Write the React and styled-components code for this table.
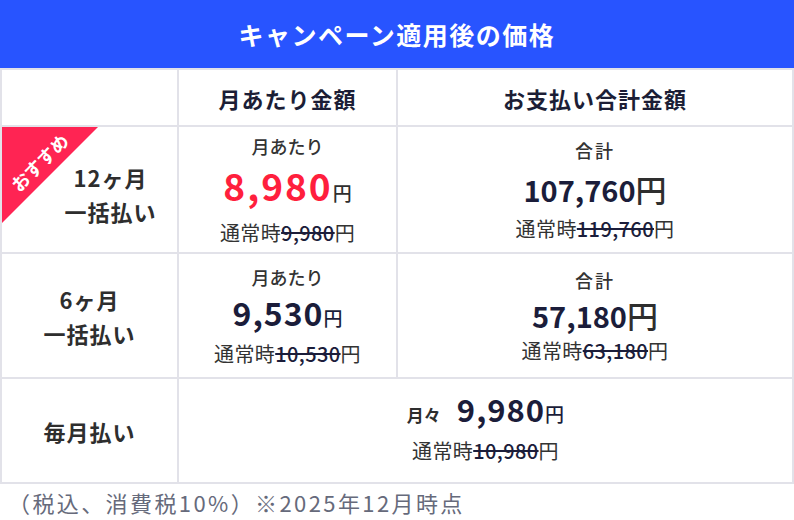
import React from 'react';
import styled, { createGlobalStyle } from 'styled-components';

const GlobalStyle = createGlobalStyle`
    body {
        margin: 0;
        background: #fff;
        font-family: "Noto Sans CJK JP", "Noto Sans", sans-serif;
    }
`;

const Page = styled.div`
    width: 794px;
    height: 520px;
    overflow: hidden;
    background: #fff;
`;

const Title = styled.div`
    height: 68px;
    background-color: #2854ff;
    color: #fff;
    font-size: 25px;
    font-weight: 700;
    letter-spacing: 1.5px;
    display: flex;
    align-items: center;
    justify-content: center;
`;

const Grid = styled.div`
    display: grid;
    grid-template-columns: 175px 217px 1fr;
    grid-template-rows: 55px 125px 123px 103px;
    gap: 2px;
    padding: 2px;
    background-color: #e2e2e9;
`;

const Cell = styled.div`
    position: relative;
    overflow: hidden;
    background-color: #fff;
    display: flex;
    flex-direction: column;
    align-items: center;
    justify-content: center;
    grid-column: ${(p) => p.span || 'auto'};
`;

const HeadText = styled.div`
    font-size: 22px;
    font-weight: 700;
    letter-spacing: 1px;
    color: #1c1e36;
`;

const PlanLabel = styled.div`
    font-size: 22px;
    font-weight: 700;
    line-height: 34px;
    letter-spacing: 1px;
    color: #2e2e2e;
    text-align: center;
    margin-top: ${(p) => p.offset || 0}px;
    margin-left: ${(p) => p.shift || 0}px;
`;

const Badge = styled.div`
    position: absolute;
    top: 0;
    left: 0;
    width: 96px;
    height: 96px;
`;

const Corner = styled.div`
    width: 100%;
    height: 100%;
    background-color: #ff2453;
    clip-path: polygon(0 0, 100% 0, 0 100%);
`;

const BadgeText = styled.span`
    position: absolute;
    top: 23px;
    left: 1px;
    width: 72px;
    text-align: center;
    transform: rotate(-45deg);
    color: #fff;
    font-size: 18px;
    font-weight: 700;
    line-height: 24px;
`;

const SmallLabel = styled.div`
    font-size: 18px;
    font-weight: 500;
    color: #333;
    line-height: 26px;
    letter-spacing: ${(p) => p.spacing || 0}px;
`;

const Price = styled.div`
    display: flex;
    align-items: baseline;
    justify-content: center;
    line-height: ${(p) => p.lh || 48}px;
    color: ${(p) => (p.red ? '#ff1f3d' : '#1b1d3a')};
`;

const Amount = styled.span`
    font-size: ${(p) => p.size}px;
    font-weight: 700;
    letter-spacing: ${(p) => p.spacing || 0}px;
`;

const Yen = styled.span`
    font-size: ${(p) => p.size}px;
    font-weight: 500;
    color: ${(p) => (p.dark ? '#1b1d3a' : '#2e2e2e')};
`;

const Regular = styled.div`
    font-size: 20px;
    color: #333;
    line-height: 28px;
    letter-spacing: 0.4px;
`;

const Struck = styled.span`
    text-decoration: line-through;
    text-decoration-thickness: 2px;
    color: #1b1d3a;
    font-weight: 500;
`;

const MonthlyLine = styled.div`
    display: flex;
    align-items: baseline;
    gap: 16px;
    line-height: 44px;
    margin-top: -10px;
`;

const MonthlyTag = styled.span`
    font-size: 17px;
    font-weight: 700;
    color: #2e2e2e;
`;

const Note = styled.div`
    padding: 2px 0 0 8px;
    font-size: 22px;
    letter-spacing: 2.4px;
    color: #666a7b;
`;

const Plan = ({ label, labelTop, labelShift, tag, amount, regular, red, total, totalRegular }) => (
    <>
        <Cell>
            {tag && (
                <Badge>
                    <Corner />
                    <BadgeText>{tag}</BadgeText>
                </Badge>
            )}
            <PlanLabel offset={labelTop} shift={labelShift}>
                {label[0]}
                <br />
                {label[1]}
            </PlanLabel>
        </Cell>
        <Cell>
            <SmallLabel>月あたり</SmallLabel>
            <Price red={red} lh={red ? 52 : 44}>
                <Amount size={red ? 37 : 32} spacing={red ? 2 : 1}>{amount}</Amount>
                <Yen size={19} dark={!red}>円</Yen>
            </Price>
            <Regular>
                通常時<Struck>{regular}</Struck>円
            </Regular>
        </Cell>
        <Cell>
            <SmallLabel spacing={2}>合計</SmallLabel>
            <Price lh={red ? 52 : 44}>
                <Amount size={29}>{total}</Amount>
                <Yen size={31}>円</Yen>
            </Price>
            <Regular>
                通常時<Struck>{totalRegular}</Struck>円
            </Regular>
        </Cell>
    </>
);

const App = () => {
    return (
        <Page>
            <GlobalStyle />
            <Title>キャンペーン適用後の価格</Title>
            <Grid>
                <Cell />
                <Cell>
                    <HeadText>月あたり金額</HeadText>
                </Cell>
                <Cell>
                    <HeadText>お支払い合計金額</HeadText>
                </Cell>
                <Plan
                    label={['12ヶ月', '一括払い']}
                    labelTop={8}
                    labelShift={42}
                    tag="おすすめ"
                    amount="8,980"
                    regular="9,980"
                    red
                    total="107,760"
                    totalRegular="119,760"
                />
                <Plan
                    label={['6ヶ月', '一括払い']}
                    amount="9,530"
                    regular="10,530"
                    total="57,180"
                    totalRegular="63,180"
                />
                <Cell>
                    <PlanLabel>毎月払い</PlanLabel>
                </Cell>
                <Cell span="2 / 4">
                    <MonthlyLine>
                        <MonthlyTag>月々</MonthlyTag>
                        <Price lh={44}>
                            <Amount size={31} spacing={1}>9,980</Amount>
                            <Yen size={19} dark>円</Yen>
                        </Price>
                    </MonthlyLine>
                    <Regular>
                        通常時<Struck>10,980</Struck>円
                    </Regular>
                </Cell>
            </Grid>
            <Note>（税込、消費税10%）※2025年12月時点</Note>
        </Page>
    );
};

export default App;
